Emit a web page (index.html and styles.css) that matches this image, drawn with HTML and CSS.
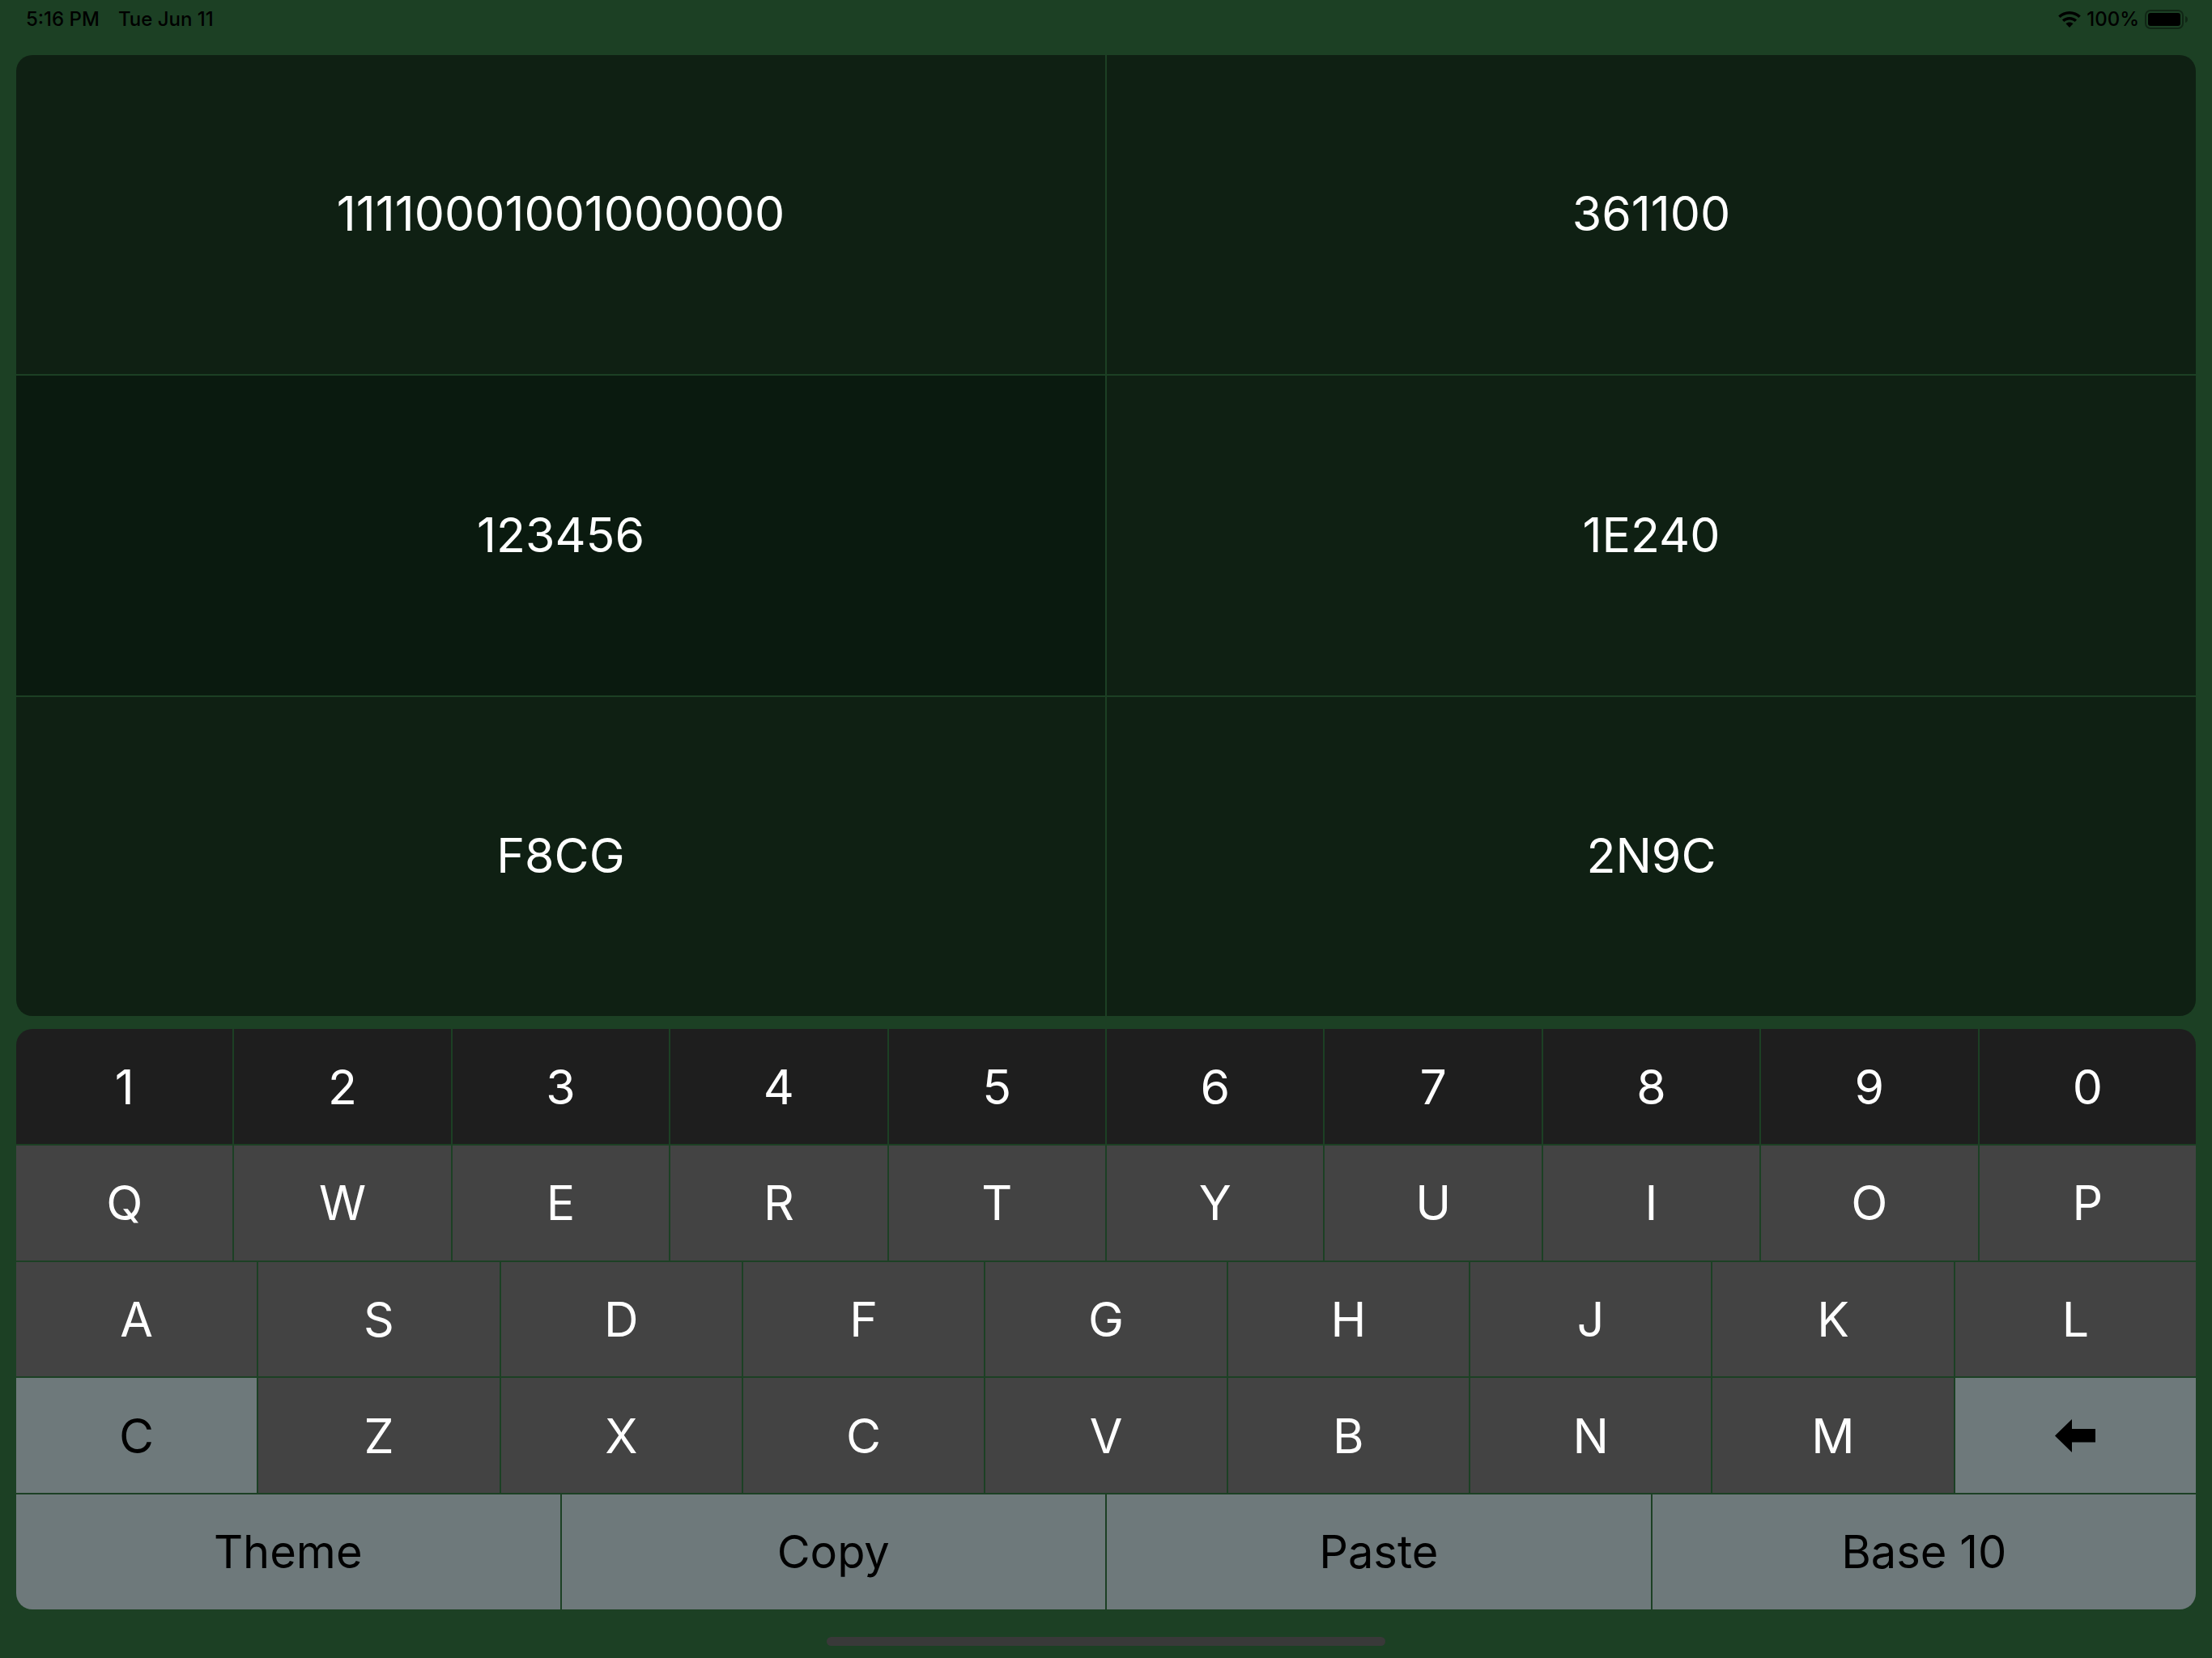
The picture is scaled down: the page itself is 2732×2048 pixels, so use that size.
FILE: index.html
```html
<!DOCTYPE html>
<html lang="en">
<head>
<meta charset="utf-8">
<meta name="viewport" content="width=device-width, initial-scale=1">
<title>Base Converter</title>
<link rel="stylesheet" href="styles.css">
</head>
<body>
<div class="app">
  <header class="status">
    <div class="status-group status-left">
      <span>5:16 PM</span>
      <span>Tue Jun 11</span>
    </div>
    <div class="status-group status-right">
      <svg class="wifi" viewBox="0 0 28 20" aria-hidden="true">
        <path d="M14 0C8.600 0 3.700 2.100 0.200 5.500L2.700 8C5.600 5.200 9.600 3.500 14 3.500S22.400 5.200 25.300 8L27.800 5.500C24.300 2.100 19.400 0 14 0Z"/>
        <path d="M14 7C10.500 7 7.300 8.300 4.900 10.400L7.400 12.900C9.100 11.400 11.500 10.500 14 10.500S18.900 11.400 20.600 12.900L23.100 10.400C20.700 8.300 17.500 7 14 7Z"/>
        <path d="M14 13.500C12.300 13.500 10.700 14.200 9.500 15.200L14 19.900L18.500 15.200C17.300 14.200 15.700 13.500 14 13.500Z"/>
      </svg>
      <span>100%</span>
      <svg class="battery" viewBox="0 0 54 24" aria-hidden="true">
        <rect x="1" y="1" width="46" height="22" rx="6" fill="none" stroke="#000" stroke-opacity="0.4" stroke-width="2"/>
        <rect x="4" y="4" width="40" height="16" rx="3"/>
        <path d="M50 8C52 8.500 53 10 53 12S52 15.500 50 16Z" fill-opacity="0.4"/>
      </svg>
    </div>
  </header>

  <main class="display">
    <button class="value" type="button">11110001001000000</button>
    <button class="value" type="button">361100</button>
    <button class="value value-active" type="button">123456</button>
    <button class="value" type="button">1E240</button>
    <button class="value" type="button">F8CG</button>
    <button class="value" type="button">2N9C</button>
  </main>

  <section class="keypad" aria-label="Keypad">
    <div class="row">
      <button class="key digit" type="button">1</button>
      <button class="key digit" type="button">2</button>
      <button class="key digit" type="button">3</button>
      <button class="key digit" type="button">4</button>
      <button class="key digit" type="button">5</button>
      <button class="key digit" type="button">6</button>
      <button class="key digit" type="button">7</button>
      <button class="key digit" type="button">8</button>
      <button class="key digit" type="button">9</button>
      <button class="key digit" type="button">0</button>
    </div>
    <div class="row">
      <button class="key" type="button">Q</button>
      <button class="key" type="button">W</button>
      <button class="key" type="button">E</button>
      <button class="key" type="button">R</button>
      <button class="key" type="button">T</button>
      <button class="key" type="button">Y</button>
      <button class="key" type="button">U</button>
      <button class="key" type="button">I</button>
      <button class="key" type="button">O</button>
      <button class="key" type="button">P</button>
    </div>
    <div class="row">
      <button class="key" type="button">A</button>
      <button class="key" type="button">S</button>
      <button class="key" type="button">D</button>
      <button class="key" type="button">F</button>
      <button class="key" type="button">G</button>
      <button class="key" type="button">H</button>
      <button class="key" type="button">J</button>
      <button class="key" type="button">K</button>
      <button class="key" type="button">L</button>
    </div>
    <div class="row">
      <button class="key action" type="button">C</button>
      <button class="key" type="button">Z</button>
      <button class="key" type="button">X</button>
      <button class="key" type="button">C</button>
      <button class="key" type="button">V</button>
      <button class="key" type="button">B</button>
      <button class="key" type="button">N</button>
      <button class="key" type="button">M</button>
      <button class="key action" type="button" aria-label="Backspace">
        <svg class="arrow" viewBox="0 0 50 41" aria-hidden="true"><path d="M0 20.500L21 0V12H50V28.500H21V41Z"/></svg>
      </button>
    </div>
    <div class="row">
      <button class="key action word" type="button">Theme</button>
      <button class="key action word" type="button">Copy</button>
      <button class="key action word" type="button">Paste</button>
      <button class="key action word" type="button">Base 10</button>
    </div>
  </section>

  <footer class="home"><div class="home-bar"></div></footer>
</div>
</body>
</html>
```
FILE: styles.css
```css
* {
  box-sizing: border-box;
}

body {
  margin: 0;
  background: #1c4024;
  font-family: Inter, "Liberation Sans", sans-serif;
}

.app {
  display: flex;
  flex-direction: column;
  min-height: 100vh;
  padding: 0 20px;
}

.status {
  display: flex;
  justify-content: space-between;
  height: 48px;
  margin-bottom: 20px;
  padding: 0 9px 0 12px;
  font-size: 24px;
  font-weight: 500;
  line-height: 48px;
  color: #000;
}

.status-group {
  display: flex;
  align-items: center;
}

.status-left {
  gap: 23px;
}

.status-right {
  gap: 7px;
}

.wifi {
  width: 28px;
  height: 20px;
}

.battery {
  width: 54px;
  height: 24px;
}

.display {
  display: grid;
  flex: 1;
  grid-template-columns: repeat(2, 1fr);
  grid-auto-rows: 1fr;
  gap: 2px;
  margin-bottom: 16px;
  border-radius: 20px;
  overflow: hidden;
}

.value,
.key {
  min-width: 0;
  margin: 0;
  padding: 0;
  border: 0;
  font: inherit;
  font-size: 59px;
  color: #fff;
}

.value {
  padding-bottom: 3px;
  background: #0f2013;
}

.value-active {
  background: #0a1a0f;
}

.keypad {
  display: grid;
  grid-auto-rows: 1fr;
  gap: 2px;
  min-height: 35vh;
  border-radius: 20px;
  overflow: hidden;
}

.row {
  display: grid;
  grid-auto-flow: column;
  grid-auto-columns: 1fr;
  gap: 2px;
}

.key {
  display: flex;
  align-items: center;
  justify-content: center;
  background: #434343;
}

.digit {
  background: #1e1e1e;
}

.action {
  background: #6e797b;
  color: #000;
}

.word {
  font-size: 56px;
}

.arrow {
  width: 50px;
  height: 41px;
}

.home {
  display: flex;
  justify-content: center;
  height: 60px;
  padding-top: 34px;
}

.home-bar {
  width: 690px;
  max-width: 100%;
  height: 11px;
  border-radius: 6px;
  background: #393939;
}
```
